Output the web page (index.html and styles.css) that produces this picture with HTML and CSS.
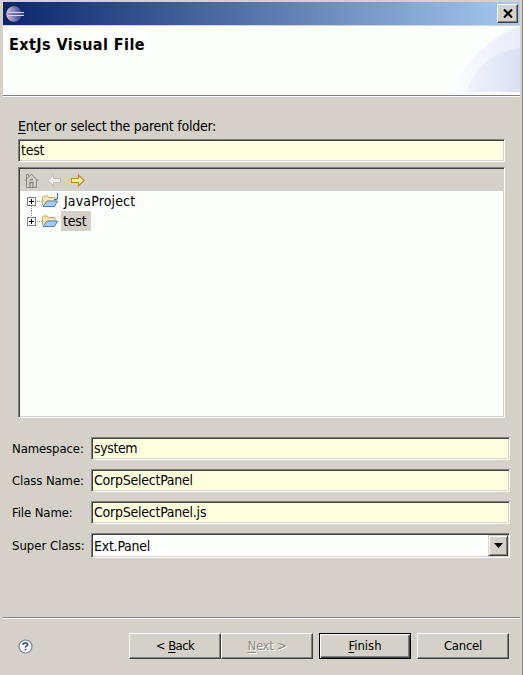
FILE: index.html
```html
<!DOCTYPE html>
<html lang="en">
<head>
<meta charset="utf-8">
<title>ExtJs Visual File</title>
<link rel="stylesheet" href="styles.css">
</head>
<body>
<div class="window">
  <header class="titlebar">
    <svg class="logo" width="19" height="16" viewBox="0 0 19 16">
      <defs><linearGradient id="orb"><stop offset="0" stop-color="#e3b2c6"/><stop offset=".4" stop-color="#918fc2"/><stop offset="1" stop-color="#35438c"/></linearGradient></defs>
      <circle cx="8" cy="8" r="7.800" fill="url(#orb)"/>
      <path d="M2 6.500h16M2 9.500h16" stroke="#d3d9f5"/>
      <path d="M2 8h16" stroke="#5765a6"/>
    </svg>
    <button class="close" aria-label="Close"><svg width="10" height="9" viewBox="0 0 10 9"><path d="M1 .5l8 8M9 .5l-8 8" stroke="#000" stroke-width="2"/></svg></button>
  </header>
  <section class="banner">
    <h1>ExtJs Visual File</h1>
    <svg class="swoosh" width="70" height="66" viewBox="0 0 70 66">
      <defs>
        <linearGradient id="outer"><stop offset="0" stop-color="#fdfffd"/><stop offset=".6" stop-color="#eff2fc"/><stop offset="1" stop-color="#e9edfa"/></linearGradient>
        <linearGradient id="inner"><stop offset="0" stop-color="#f2f4fc"/><stop offset="1" stop-color="#dae1f5"/></linearGradient>
      </defs>
      <path d="M0 66C15 37 38 11 70 0V66Z" fill="url(#outer)"/>
      <path d="M16 66C26 41 43 25 70 22V66Z" fill="url(#inner)"/>
    </svg>
  </section>
  <main class="content">
    <section class="folder">
      <label class="prompt"><u>E</u>nter or select the parent folder:</label>
      <div class="field">test</div>
      <div class="tree">
        <div class="toolbar">
          <svg width="15" height="15" viewBox="0 0 15 15" fill="none" stroke="#868686">
            <path d="M.7 8L7.500 1.200 14.300 8M2.500 6.500v8h10v-8M2.500 6V1.500h2v2"/><path d="M6 14V9.500h3V14M6 6.500h3" stroke-width="1.300"/>
          </svg>
          <svg width="15" height="13" viewBox="0 0 15 13"><path d="M1 6.500L6.500 1v3.500h7v4h-7V12z" fill="#efefed" stroke="#c0bfbb"/></svg>
          <svg width="15" height="13" viewBox="0 0 15 13"><path d="M14 6.500L8.500 1v3.500h-7v4h7V12z" fill="#ffefad" stroke="#c18a2c" stroke-width="1.200"/></svg>
        </div>
        <div class="row">
          <svg width="34" height="20" viewBox="0 0 34 20">
            <path d="M4.500 15v5M10 10.500h5" stroke="#8a8a8a" stroke-dasharray="1 1"/>
            <rect x=".5" y="6.500" width="8" height="8" fill="#fff" stroke="#808080"/><path d="M2 10.500h5M4.500 8v5" stroke="#000"/>
            <path d="M15.500 14V6.500l1-1.500h4l1 1.500h6.500V10" fill="#fbe6b0" stroke="#c9a66a"/>
            <path d="M16 15.500l4-5.500h10.500l-3 5.500z" fill="#a9ccf3" stroke="#477fc0"/>
            <path d="M30.500 2v4.500q0 2-2 2h-1.500" fill="none" stroke="#4b6fac" stroke-width="1.200"/>
          </svg>
          <span class="name java">JavaProject</span>
        </div>
        <div class="row">
          <svg width="34" height="20" viewBox="0 0 34 20">
            <path d="M4.500 0v6M10 10.500h5" stroke="#8a8a8a" stroke-dasharray="1 1"/>
            <rect x=".5" y="6.500" width="8" height="8" fill="#fff" stroke="#808080"/><path d="M2 10.500h5M4.500 8v5" stroke="#000"/>
            <path d="M15.500 14V6.500l1-1.500h4l1 1.500h6.500V10" fill="#fbe6b0" stroke="#c9a66a"/>
            <path d="M16 15.500l4-5.500h10.500l-3 5.500z" fill="#a9ccf3" stroke="#477fc0"/>
          </svg>
          <span class="name selected">test</span>
        </div>
      </div>
    </section>
    <section class="form">
      <label>Namespace:</label><div class="field system">system</div>
      <label>Class Name:</label><div class="field">CorpSelectPanel</div>
      <label>File Name:</label><div class="field">CorpSelectPanel.js</div>
      <label class="super">Super Class:</label>
      <div class="field combo"><span>Ext.Panel</span><button class="drop" aria-label="Open list"><svg width="9" height="5" viewBox="0 0 9 5"><path d="M0 0h9L4.500 5z"/></svg></button></div>
    </section>
  </main>
  <footer class="footer">
    <svg class="help" width="15" height="15" viewBox="0 0 15 15"><circle cx="7.500" cy="7.500" r="6.500" fill="#fbfcff" stroke="#71809b" stroke-width="1.200"/><path d="M5.300 6V5.300Q5.300 3.800 7.500 3.800T9.700 5.500Q9.700 6.500 8.500 7.100T7.500 8.700M7.500 9.800v1.700" fill="none" stroke="#415782" stroke-width="1.700"/></svg>
    <button class="btn back"><span>&lt; <u>B</u>ack</span></button>
    <button class="btn disabled"><span><u>N</u>ext &gt;</span></button>
    <button class="btn default"><span><u>F</u>inish</span></button>
    <button class="btn"><span>Cancel</span></button>
  </footer>
</div>
</body>
</html>
```

FILE: styles.css
```css
* { box-sizing: border-box; }
body {
  margin: 0;
  background: #d5d1c8;
  color: #000;
  font: 14px/18px "DejaVu Sans Condensed", "DejaVu Sans", sans-serif;
  font-stretch: condensed;
}
svg { display: block; flex: none; }
button { padding: 0; font: inherit; color: inherit; background: #d5d1c8; }
u { text-decoration-thickness: 1px; text-underline-offset: 2px; }

.window {
  width: 523px;
  height: 675px;
  padding: 2px 2px 0 3px;
  border-right: 1px solid #808080;
  display: flex;
  flex-direction: column;
}
.titlebar {
  height: 23px;
  flex: none;
  display: flex;
  align-items: center;
  justify-content: space-between;
  padding: 0 2px 0 3px;
  background: linear-gradient(90deg, #0b256b, #a6caf0);
}
.close {
  width: 21px;
  height: 19px;
  display: grid;
  place-items: center;
  border: 1px solid;
  border-color: #fff #404040 #404040 #fff;
  box-shadow: inset -1px -1px #808080;
}
.banner {
  height: 71px;
  flex: none;
  display: flex;
  justify-content: space-between;
  border-top: 1px solid #d5d1c8;
  border-bottom: 1px solid #808080;
  box-shadow: 0 1px #fff;
  background: #fdfffd;
}
h1 {
  margin: 9px 0 0 6px;
  font-size: 16px;
  line-height: 20px;
  font-weight: bold;
  letter-spacing: .43px;
  white-space: nowrap;
}
.content { flex: 1; padding-top: 21px; }
.folder { width: 487px; margin-left: 15px; }
.prompt { display: block; height: 22px; white-space: nowrap; letter-spacing: -.25px; }
.field {
  height: 23px;
  padding-left: 2px;
  line-height: 21px;
  letter-spacing: -.24px;
  background: #ffffdf;
  border: 1px solid;
  border-color: #808080 #fff #fff #808080;
  box-shadow: inset 1px 1px #404040, inset -1px -1px #d5d1c8;
}
.system { letter-spacing: -.4px; }
.tree {
  height: 251px;
  margin-top: 5px;
  border: 1px solid;
  border-color: #808080 #fff #fff #808080;
  box-shadow: inset 1px 1px #404040, inset -1px -1px #d5d1c8;
  background: #fdfffd;
  padding: 1px;
}
.toolbar {
  height: 22px;
  display: flex;
  align-items: center;
  gap: 8px;
  padding-left: 4px;
  background: #d5d1c8;
}
.row { height: 20px; display: flex; padding-left: 7px; }
.name { height: 20px; line-height: 20px; padding: 0 4px 0 2px; }
.java { letter-spacing: .15px; padding-left: 3px; }
.selected { width: 30px; background: #d5d1c8; letter-spacing: -.2px; }
.form {
  display: grid;
  grid-template-columns: 79px 419px;
  grid-template-rows: 23px 23px 23px 25px;
  row-gap: 9px;
  margin: 19px 0 0 9px;
  font-size: 13px;
}
.form label { line-height: 23px; white-space: nowrap; letter-spacing: -.1px; }
.form .super { line-height: 25px; letter-spacing: 0; }
.form .field { font-size: 14px; }
.form .combo {
  height: 25px;
  padding: 1px 1px 1px 2px;
  background: #fdfffd;
  display: flex;
  justify-content: space-between;
  line-height: 22px;
}
.drop {
  width: 20px;
  height: 21px;
  display: grid;
  place-items: center;
  border: 1px solid;
  border-color: #d5d1c8 #404040 #404040 #d5d1c8;
  box-shadow: inset 1px 1px #fff, inset -1px -1px #808080;
}
.footer {
  height: 58px;
  flex: none;
  display: flex;
  padding: 15px 0 0 15px;
  border-top: 1px solid #808080;
  box-shadow: inset 0 1px #fff;
}
.help { margin: 6px 96px 0 0; }
.btn {
  width: 92px;
  height: 26px;
  font-size: 13px;
  letter-spacing: -.25px;
  border: 1px solid;
  border-color: #fff #404040 #404040 #fff;
  box-shadow: inset -1px -1px #808080;
}
.back { letter-spacing: -.6px; }
.disabled { color: #8c8a85; text-shadow: 1px 1px #fff; }
.default {
  margin: 0 6px;
  letter-spacing: 0;
  border-color: #000;
  box-shadow: inset 1px 1px #fff, inset -1px -1px #404040, inset -2px -2px #808080;
}
```
